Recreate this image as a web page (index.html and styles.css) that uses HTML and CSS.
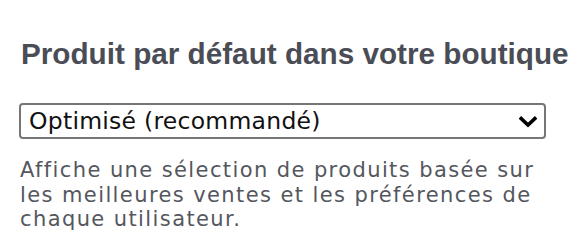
FILE: index.html
```html
<!DOCTYPE html>
<html lang="fr">
<head>
<meta charset="utf-8">
<link rel="stylesheet" href="styles.css">
</head>
<body>
<div class="field">
  <h2 class="field-title">Produit par défaut dans votre boutique</h2>
  <div class="select">
    <span class="select-value">Optimisé (recommandé)</span>
    <svg class="select-chevron" width="18" height="12" viewBox="0 0 18 12" aria-hidden="true">
      <path d="M2.2 2.6 L9 9 L15.8 2.6" fill="none" stroke="#000" stroke-width="3.6" stroke-linecap="square"/>
    </svg>
  </div>
  <p class="field-help">Affiche une sélection de produits basée sur les meilleures ventes et les préférences de chaque utilisateur.</p>
</div>
</body>
</html>
```

FILE: styles.css
```css
html, body {
  margin: 0;
  padding: 0;
  background: #ffffff;
}
body {
  padding: 39px 0 0 19px;
}
.field {
  width: 527px;
}
.field-title {
  margin: 0;
  font-family: "Liberation Sans", Arial, sans-serif;
  font-weight: 700;
  font-size: 29.7px;
  line-height: 30px;
  color: #4a4d56;
  white-space: nowrap;
  padding-left: 2px;
}
.select {
  margin-top: 34px;
  box-sizing: border-box;
  height: 36px;
  border: 2px solid #767676;
  border-radius: 4px;
  display: flex;
  align-items: center;
  justify-content: space-between;
  padding: 0 7px 0 8px;
}
.select-value {
  font-family: "DejaVu Sans", sans-serif;
  font-size: 23.5px;
  letter-spacing: 0.25px;
  line-height: 28px;
  color: #111;
}
.select-chevron {
  display: block;
  margin-top: 1px;
}
.field-help {
  margin: 19px 0 0 1px;
  font-family: "DejaVu Sans", sans-serif;
  font-size: 21px;
  letter-spacing: 1.4px;
  line-height: 24.5px;
  color: #54575e;
}
```
